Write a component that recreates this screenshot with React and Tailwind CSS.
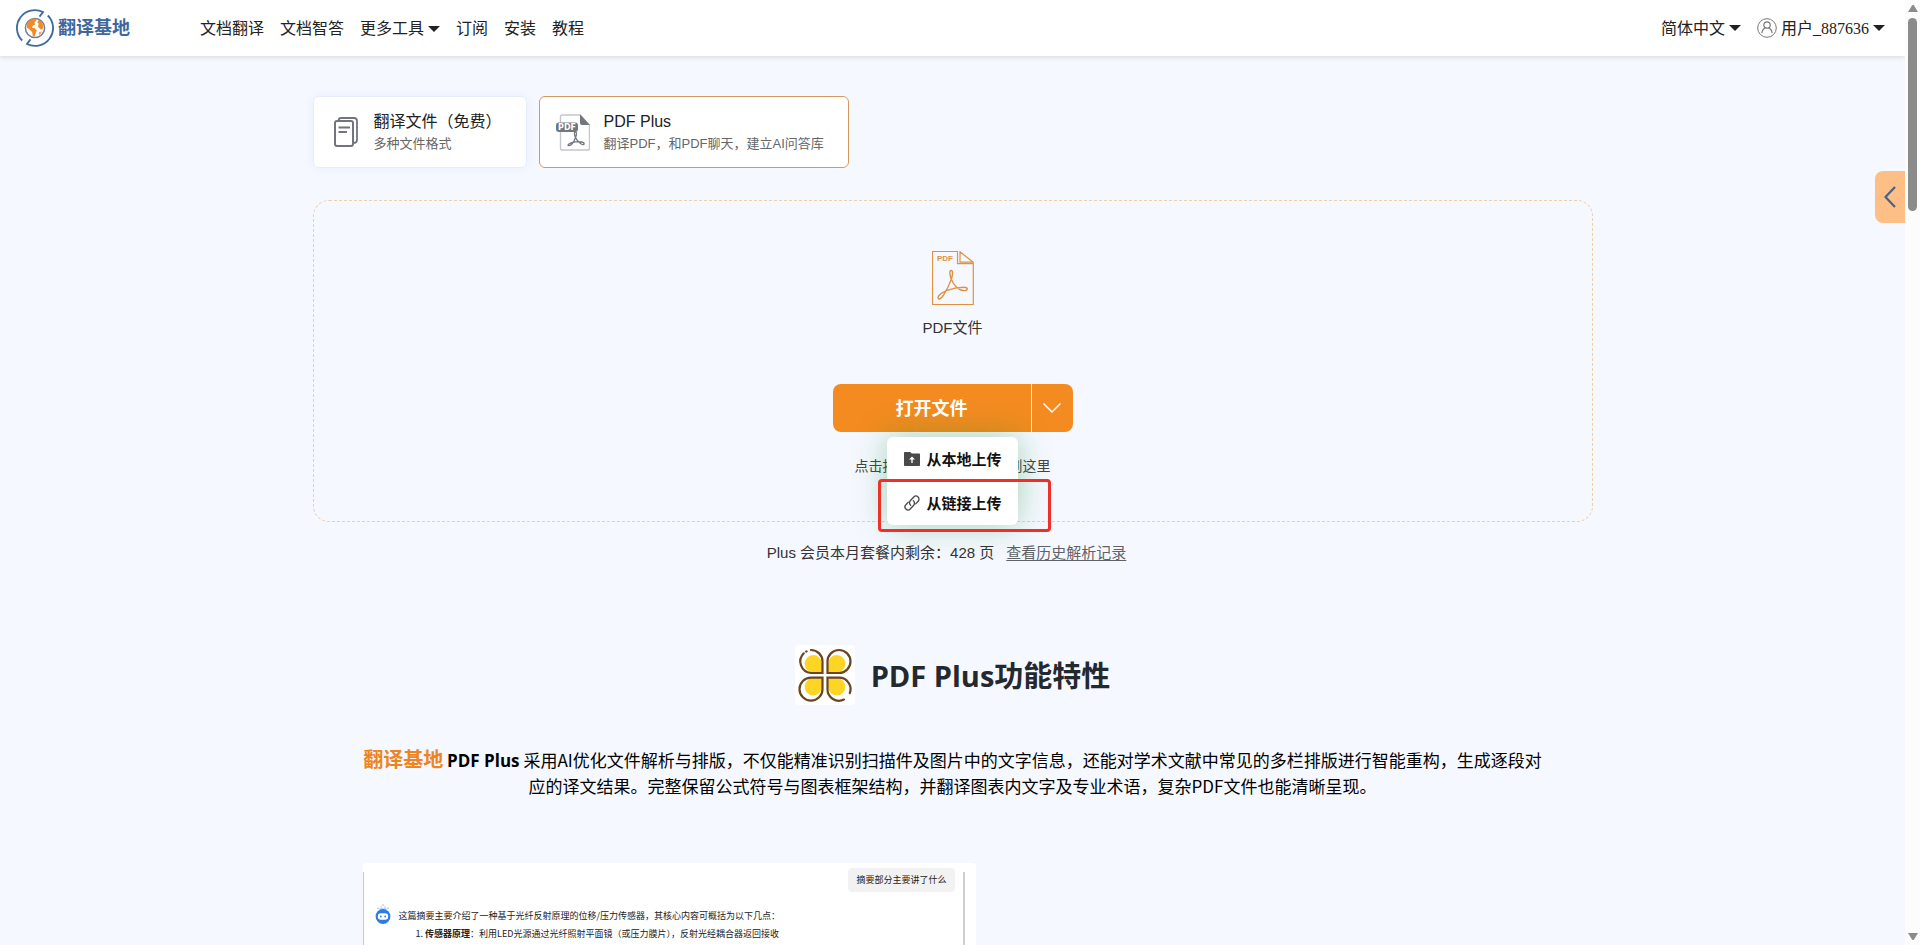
const navItems = [
  { label: "文档翻译" },
  { label: "文档智答" },
  { label: "更多工具", caret: true },
  { label: "订阅" },
  { label: "安装" },
  { label: "教程" },
]

function Caret() {
  return (
    <svg viewBox="0 0 12 6" className="w-3 h-1.5" fill="currentColor" aria-hidden="true">
      <path d="M0 0h12L6 6z" />
    </svg>
  )
}

function LogoMark() {
  return (
    <svg viewBox="0 0 38 38" className="w-[38px] h-[38px]" fill="none" aria-hidden="true">
      <g stroke="#3f6a9c" strokeWidth="1.800">
        <path d="M6.200 31.500A18 17.800 0 0 1 27 3L23.500 7.600" />
        <path d="M31.800 6.500A18 17.800 0 0 1 11 35L14.500 30.400" />
      </g>
      <circle cx="19" cy="19" r="9.600" fill="#fff" stroke="#6f7f9c" strokeWidth="1.500" />
      <path
        d="M12 13c2-2.600 5-3.600 7.500-3.400l1 2-2 1.800.6 2-2.300 1.200-.8 2.200 2.800.4 2 2.200-1 2.600-1.200 3.600-1.800-.6-.6-3.800-2.600-2.600-2.600-1.800c-.4-2 0-4 1-5.800z"
        fill="#f28a26"
      />
      <path d="M22.500 11l3 1.600 2 4.400-1.200 3.400-2-.2-2.400-2.600.8-2.800-1.400-1.400z" fill="#f28a26" />
      <path d="M23 23l3-.4-1.600 2.800-1.800.6z" fill="#f6a95c" />
    </svg>
  )
}

function UserIcon() {
  return (
    <svg viewBox="0 0 20 20" className="w-5 h-5" fill="none" stroke="#777" aria-hidden="true">
      <circle cx="10" cy="10" r="9.300" strokeWidth="1" />
      <circle cx="10" cy="7" r="3.200" strokeWidth="1.200" />
      <path d="M4.800 15.200c.5-3 2-4.800 3.700-5.400M15.200 15.200c-.5-3-2-4.800-3.700-5.400" strokeWidth="1.200" />
    </svg>
  )
}

function DocsIcon() {
  return (
    <svg viewBox="0 0 24 30" className="w-6 h-[30px]" fill="none" stroke="#72757d" strokeWidth="2" aria-hidden="true">
      <rect x="1" y="4" width="18" height="25" rx="2" />
      <path d="M4.500 3.500C4.700 1.800 5.500 1 7 1h13c2 0 3 1 3 3v19c0 1.800-1.200 2.800-3 3" strokeWidth="1.800" />
      <path d="M4.500 10.500h11.500M4.500 15h8.500" />
    </svg>
  )
}

function PdfBadgeIcon() {
  return (
    <svg viewBox="0 0 34 37" className="w-[34px] h-[37px]" fill="none" aria-hidden="true">
      <path d="M24 1H6a1.500 1.500 0 0 0-1.500 1.500v32A1.500 1.500 0 0 0 6 36h26a1.500 1.500 0 0 0 1.500-1.500V11" stroke="#c3c6ca" strokeWidth="1.400" />
      <path d="M24 0v9a2 2 0 0 0 2 2h8z" fill="#72767f" />
      <path
        d="M19.500 18c-1.600 0-1.200 3 0 5.500-1.300 3.600-4 8-6.600 8.200-2.400-.2.300-3.200 6.500-3.900 5.200-.6 8.900.4 8.700 2.200-.6 1.900-6.300-1.200-8.600-6.500 1.200-2.700 1.400-5.500 0-5.500z"
        stroke="#72767f"
        strokeWidth="1.300"
      />
      <rect x="0" y="8.500" width="22" height="9.500" rx="3" fill="#72767f" />
      <text x="11" y="16" textAnchor="middle" fontSize="8" fontWeight="700" fontFamily="DejaVu Sans, sans-serif" fill="#fff">
        PDF
      </text>
    </svg>
  )
}

function PdfFileIcon() {
  return (
    <svg viewBox="0 0 42 54" className="w-[42px] h-[54px]" fill="none" stroke="#e1913f" aria-hidden="true">
      <path d="M25.500 .5H.5v53h40.800V12.700H25.500z" strokeWidth="1.200" />
      <path d="M28 .8v10.400h13.200z" strokeWidth="1.200" />
      <path
        d="M19.200 19.500c-2.200 0-1.400 4.500 0 8.500 1.800 5 7 11.500 13 11.600 4.500 0 4-3.400-.6-3.400-6 .1-12 1.400-16.600 3.200-4.600 2-9 5-9 7.400.2 2.200 3.200 1.200 5.200-2.200 3-4.600 6.500-11.600 8.400-17.200 1.200-4 1.400-7.900-.4-7.900z"
        strokeWidth="1.400"
      />
      <text x="13" y="9.500" textAnchor="middle" fontSize="8" fontWeight="700" fontFamily="Liberation Sans, sans-serif" fill="#e1913f" stroke="none">
        PDF
      </text>
    </svg>
  )
}

function FolderUpIcon() {
  return (
    <svg viewBox="0 0 16 14" className="w-4 h-3.5" aria-hidden="true">
      <path d="M.8 0h5.400l1.600 1.500h7.400a.8.800 0 0 1 .8.800v10.900a.8.800 0 0 1-.8.800H.8a.8.800 0 0 1-.8-.8V.8A.8.800 0 0 1 .8 0z" fill="#4a4a4a" />
      <path d="M8 4.500l3 3H8.700V11H7.300V7.500H5z" fill="#fff" />
    </svg>
  )
}

function LinkIcon() {
  return (
    <svg viewBox="0 0 24 24" className="w-4 h-4" fill="none" stroke="#4a4a4a" strokeWidth="2" strokeLinecap="round" aria-hidden="true">
      <path d="M10 15.500a5 5 0 0 1-.3-7.200l5-5.300a4.500 4.500 0 0 1 6.500 6.300l-3.700 4" />
      <path d="M14 8.500a5 5 0 0 1 .3 7.200l-5 5.300a4.500 4.500 0 0 1-6.500-6.300l3.700-4" />
    </svg>
  )
}

function CloverIcon() {
  return (
    <svg viewBox="0 0 60 60" className="w-[60px] h-[60px] bg-white rounded" fill="none" aria-hidden="true">
      <g fill="#ffd525">
        <path d="M27 27.500h-8.500A8.700 8.700 0 1 1 27 18.500z" />
        <path d="M33 27.500h8.500A8.700 8.700 0 1 0 33 18.500z" />
        <path d="M27 33h-8.500A8.700 8.700 0 1 0 27 42z" />
        <path d="M33 33h8.500A8.700 8.700 0 1 1 33 42z" />
      </g>
      <g stroke="#6b4520" strokeWidth="2.200" strokeLinecap="round">
        <path d="M16 5a11.500 11.500 0 0 1 11.500 11.500V28H16A11.500 11.500 0 0 1 8.800 8.300" />
        <path d="M11.200 6.600l.4-.2" />
        <path d="M32.500 28V16.500A11.500 11.500 0 1 1 44 28z" />
        <path d="M27.500 32.700V44.200A11.500 11.500 0 1 1 16 32.700z" />
        <path d="M54.800 48.200A11.500 11.500 0 0 0 44 32.700H32.500v11.500A11.500 11.500 0 0 0 49 54.600" />
      </g>
    </svg>
  )
}

function RobotIcon() {
  return (
    <svg viewBox="0 0 16 20" className="w-4 h-5" fill="none" aria-hidden="true">
      <path d="M7.200 1h1.600M3 3.500v1.500M13 3.500v1.500M5.500 3h1.200M9.300 3h1.200M4.500 5h7" stroke="#7fb2e8" strokeWidth="1" />
      <circle cx="8" cy="12.500" r="7.400" fill="#2f7be6" />
      <rect x="2.800" y="9.300" width="10.400" height="6.400" rx="3.200" fill="#fff" />
      <circle cx="5.800" cy="12.500" r=".9" fill="#2f7be6" />
      <circle cx="10.200" cy="12.500" r=".9" fill="#2f7be6" />
    </svg>
  )
}

function Header() {
  return (
    <header className="relative z-10 flex items-center justify-between h-14 pl-4 pr-5 bg-white shadow-[0_2px_4px_rgba(0,0,0,0.1)]">
      <div className="flex items-center">
        <a href="#home" className="flex items-center gap-1 text-lg font-bold text-[#3f6799]">
          <LogoMark />
          翻译基地
        </a>
        <nav className="flex items-center gap-4 ml-[70px] pt-0.5">
          {navItems.map((item) => (
            <a key={item.label} href="#nav" className="flex items-center gap-1 leading-6">
              {item.label}
              {item.caret && <Caret />}
            </a>
          ))}
        </nav>
      </div>

      <div className="flex items-center gap-4">
        <button type="button" className="flex items-center gap-1 leading-6">
          <span className="pt-0.5">简体中文</span>
          <Caret />
        </button>
        <button type="button" className="flex items-center gap-1 leading-6 font-['Liberation_Serif','Noto_Sans_CJK_SC',serif]">
          <UserIcon />
          <span className="pt-0.5">用户_887636</span>
          <Caret />
        </button>
      </div>
    </header>
  )
}

function ModeCard({ icon, title, subtitle, active }) {
  return (
    <button
      type="button"
      className={
        active
          ? "flex items-center gap-3.5 h-[72px] pl-4 pr-6 text-left bg-white border border-[#d29a5e] rounded-md"
          : "flex items-center gap-4 h-[72px] pl-5 pr-6 text-left bg-white border border-[#e6edfa] rounded-md shadow-[0_0_8px_rgba(60,120,240,0.08)]"
      }
    >
      {icon}
      <span className="flex flex-col">
        <span className="text-base leading-6 text-[#222]">{title}</span>
        <span className="text-[13px] leading-5 text-[#666]">{subtitle}</span>
      </span>
    </button>
  )
}

function UploadMenu() {
  return (
    <div className="absolute top-full left-[54px] mt-[5px] w-[131px] bg-white rounded-md shadow-[0_0_32px_rgba(20,140,40,0.35)]">
      <button type="button" className="flex items-center gap-[7px] w-full h-11 pl-[17px] text-[15px] font-bold text-[#111]">
        <FolderUpIcon />
        <span className="pt-0.5">从本地上传</span>
      </button>
      <button type="button" className="flex items-center gap-[7px] w-full h-11 pl-[17px] text-[15px] font-bold text-[#111]">
        <LinkIcon />
        <span className="pt-0.5">从链接上传</span>
      </button>
      {/* Highlight around the link option */}
      <div className="absolute -left-[9px] -right-[33px] top-[42px] -bottom-[7px] border-[3px] border-[#ee3028] rounded pointer-events-none" />
    </div>
  )
}

function DropZone() {
  return (
    <section className="flex flex-col items-center h-[322px] mt-8 pt-[50px] border border-dashed border-[#f0cfa8] rounded-2xl">
      <PdfFileIcon />
      <p className="mt-[13px] text-[15px] leading-5 text-[#333]">PDF文件</p>
      <div className="relative z-10 flex h-12 mt-[46px] text-white">
        <button type="button" className="w-[198px] pt-0.5 bg-[#f38b20] rounded-l-lg text-lg font-bold">
          打开文件
        </button>
        <button
          type="button"
          aria-label="更多上传方式"
          className="flex items-center justify-center w-[41px] ml-px bg-[#f38b20] rounded-r-lg"
        >
          <svg viewBox="0 0 18 10" className="w-[18px] h-2.5" fill="none" stroke="currentColor" strokeWidth="1.400">
            <path d="M.5 .5L9 9l8.500-8.500" />
          </svg>
        </button>
        <UploadMenu />
      </div>
      <p className="mt-6 text-sm leading-5 text-[#444]">点击按钮，或者拖放文件到这里</p>
    </section>
  )
}

function ChatPreview() {
  return (
    <div className="w-[613px] h-[400px] mt-16 bg-white rounded text-[9px] leading-[18px] text-[#222]">
      <div className="flex h-full pt-[5px]">
        <div className="w-px mt-1 bg-[#c9c9c9]" />
        <div className="flex-1 pl-[11px] pr-2">
          <div className="flex justify-end">
            <p className="px-2 py-[3px] bg-[#f2f2f2] rounded">摘要部分主要讲了什么</p>
          </div>
          <div className="flex gap-2 mt-3">
            <RobotIcon />
            <div className="pt-[3px]">
              <p>这篇摘要主要介绍了一种基于光纤反射原理的位移/压力传感器，其核心内容可概括为以下几点：</p>
              <p className="pl-[17px]">
                1. <b>传感器原理</b>：利用LED光源通过光纤照射平面镜（或压力膜片），反射光经耦合器返回接收
              </p>
            </div>
          </div>
        </div>
        <div className="w-0.5 mt-1 mr-[11px] bg-[#d0d0d0]" />
      </div>
    </div>
  )
}

function Scrollbar() {
  return (
    <div className="flex flex-col items-center justify-between w-[15px] py-[5px] bg-[#fcfcfc] text-[#8b8b8b]" aria-hidden="true">
      <div className="flex flex-col items-center gap-1.5">
        <svg viewBox="0 0 10 7" className="w-2.5 h-[7px]" fill="currentColor">
          <path d="M4 .6a1.200 1.200 0 0 1 2 0l4 6.400H0z" />
        </svg>
        <div className="w-[9px] h-[193px] rounded-full bg-[#8b8b8b]" />
      </div>
      <svg viewBox="0 0 10 7" className="w-2.5 h-[7px]" fill="currentColor">
        <path d="M4 6.400a1.200 1.200 0 0 0 2 0L10 0H0z" />
      </svg>
    </div>
  )
}

function App() {
  return (
    <div className="flex h-screen overflow-hidden bg-[#f5f8ff] text-[#222] font-['Liberation_Sans','Noto_Sans_CJK_SC',sans-serif]">
      <div className="relative flex-1 min-w-0 overflow-hidden">
        <Header />

        <main className="max-w-[1280px] mx-auto pt-10">
          <div className="flex gap-3">
            <ModeCard icon={<DocsIcon />} title="翻译文件（免费）" subtitle="多种文件格式" />
            <ModeCard icon={<PdfBadgeIcon />} title="PDF Plus" subtitle="翻译PDF，和PDF聊天，建立AI问答库" active />
          </div>

          <DropZone />

          <p className="mt-[21px] text-center text-[15px] leading-5 text-[#333]">
            Plus 会员本月套餐内剩余：428 页
            <a href="#history" className="mx-3 text-[#606266] underline underline-offset-2">
              查看历史解析记录
            </a>
          </p>

          {/* Features */}
          <section className="px-[50px] font-['Noto_Sans_CJK_SC',sans-serif]">
            <div className="flex items-center justify-center gap-4 mt-[82px]">
              <CloverIcon />
              <h2 className="pt-0.5 text-[29px] leading-10 font-bold text-[#24292f] font-['Open_Sans','Noto_Sans_CJK_SC',sans-serif]">
                PDF Plus功能特性
              </h2>
            </div>
            <p className="mt-[42px] text-center text-[17px] leading-[26px] text-black">
              <b className="text-xl leading-none text-[#ee8420]">翻译基地</b>{" "}
              <b className="leading-none font-['Open_Sans',sans-serif]">PDF Plus</b>{" "}
              采用AI优化文件解析与排版，不仅能精准识别扫描件及图片中的文字信息，还能对学术文献中常见的多栏排版进行智能重构，生成逐段对应的译文结果。完整保留公式符号与图表框架结构，并翻译图表内文字及专业术语，复杂PDF文件也能清晰呈现。
            </p>
            <ChatPreview />
          </section>
        </main>

        <button
          type="button"
          aria-label="展开侧栏"
          className="absolute right-0 top-[171px] flex items-center justify-center w-[30px] h-[52px] bg-[#fdbf86] rounded-l-lg text-[#46628a]"
        >
          <svg viewBox="0 0 12 22" className="w-3 h-[22px]" fill="none" stroke="currentColor" strokeWidth="2.200">
            <path d="M11 1L1.500 11l9.500 10" />
          </svg>
        </button>
      </div>
      <Scrollbar />
    </div>
  )
}

export default App
